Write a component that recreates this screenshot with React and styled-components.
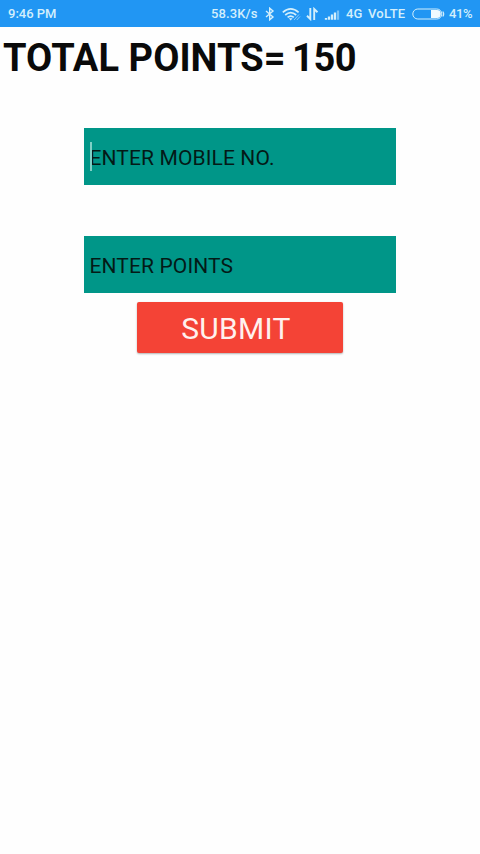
import React, { useState } from 'react';
import styled, { createGlobalStyle } from 'styled-components';

const COLORS = {
  blue: '#2196f3',
  teal: '#009688',
  red: '#f44336',
  status: '#d3effc',
  cursor: '#7fd0c6',
  entry: '#041a17',
};

const GlobalStyle = createGlobalStyle`
  * {
    box-sizing: border-box;
  }
  body {
    margin: 0;
    background-color: #fefefe;
    font-family: Roboto, 'Liberation Sans', sans-serif;
  }
`;

const Screen = styled.div`
  min-height: 100vh;
`;

const StatusBar = styled.header`
  display: flex;
  align-items: center;
  height: 27px;
  padding-left: 8px;
  background-color: ${COLORS.blue};
  color: ${COLORS.status};
  font-size: 13px;
  font-weight: 500;
  line-height: 27px;
  white-space: nowrap;
`;

const StatusText = styled.span`
  flex: none;
  width: ${({ $width }) => $width}px;
  margin-left: ${({ $left }) => $left || 0}px;
  letter-spacing: ${({ $spacing }) => $spacing || 0}px;
`;

const StatusIcon = styled.svg`
  flex: none;
  margin-left: ${({ $left }) => $left}px;
  fill: none;
  stroke: ${COLORS.status};
`;

const Heading = styled.h1`
  display: flex;
  gap: 7px;
  height: 60px;
  margin: 0;
  padding: 1px 0 0 3px;
  font-size: 38px;
  font-weight: 700;
  line-height: 60px;
  color: #0a0a0a;
  white-space: nowrap;
`;

const HeadingPart = styled.span`
  width: ${({ $width }) => $width}px;
  letter-spacing: ${({ $spacing }) => $spacing}px;
`;

const Form = styled.form`
  display: flex;
  flex-direction: column;
  align-items: center;
  padding-top: 41px;
`;

const Field = styled.label`
  display: flex;
  align-items: center;
  position: relative;
  width: 312px;
  height: 57px;
  margin-bottom: ${({ $gap }) => $gap}px;
  background-color: ${COLORS.teal};
`;

const Input = styled.input`
  width: 100%;
  height: 100%;
  padding: 2px 5px 0 5.5px;
  border: none;
  outline: none;
  background: transparent;
  color: ${COLORS.entry};
  font-family: inherit;
  font-size: 21px;
  letter-spacing: 0.12px;

  &::placeholder {
    color: ${COLORS.entry};
    opacity: 1;
  }
`;

const Cursor = styled.span`
  position: absolute;
  left: 6px;
  top: 14px;
  width: 2px;
  height: 29px;
  background-color: ${COLORS.cursor};
`;

const SubmitButton = styled.button`
  width: 206px;
  height: 51px;
  padding: 1px 0 0;
  border: none;
  border-radius: 2px;
  background-color: ${COLORS.red};
  box-shadow: 0 1px 2px rgba(0, 0, 0, 0.3);
  color: #fff1ee;
  font-family: inherit;
  font-size: 30px;
  letter-spacing: 0.3px;
  text-indent: -8px;
`;

const App = () => {
  const [mobile, setMobile] = useState('');
  const [points, setPoints] = useState('');

  return (
    <Screen>
      <GlobalStyle />
      <StatusBar>
        <StatusText $width={50}>9:46 PM</StatusText>
        <StatusText $left={153} $width={47} $spacing={0.1}>58.3K/s</StatusText>
        {/* bluetooth */}
        <StatusIcon $left={6} width="12" height="14" viewBox="0 0 12 14" strokeWidth="1.4">
          <path d="M2 4L9 10L5.7 12.8V1.2L9 4L2 10" />
        </StatusIcon>
        {/* wifi */}
        <StatusIcon $left={6} width="19" height="14" viewBox="0 0 19 14" strokeWidth="1.7">
          <path d="M0.8 5.4Q8.7 -1.6 16.6 5.4M3.2 8Q8.7 3.2 14.2 8M5.6 10.4Q8.7 7.8 11.8 10.4" />
          <path d="M6.8 11.3H10.6L8.7 13.5Z" fill={COLORS.status} stroke="none" />
          <path d="M12 13L17 7.5M14.8 13L18 9.5" strokeWidth="1" opacity="0.6" />
        </StatusIcon>
        {/* data up / down */}
        <StatusIcon $left={5} width="13" height="14" viewBox="0 0 13 14" strokeWidth="1.9">
          <path d="M4.3 1V12L1 8.8M8.2 13V2L11.5 5.2" />
        </StatusIcon>
        {/* signal */}
        <StatusIcon $left={5} width="17" height="14" viewBox="0 0 17 14" strokeWidth="2.3">
          <path d="M2 12.8V11M5 12.8V9.5M8 12.8V7.5M11 12.8V5.5" />
          <path d="M14 12.8V3.5" opacity="0.5" />
        </StatusIcon>
        <StatusText $left={5} $width={17}>4G</StatusText>
        <StatusText $left={5} $width={39} $spacing={0.25}>VoLTE</StatusText>
        {/* battery */}
        <StatusIcon $left={5} width="34" height="14" viewBox="0 0 34 14">
          <rect x="0.8" y="2" width="29" height="10" rx="5" />
          <path d="M19 3H25Q28.8 3 28.8 7T25 11H19Z" fill="#effaff" stroke="none" />
          <path d="M30.8 4.5Q32.6 7 30.8 9.5" strokeWidth="1.2" />
        </StatusIcon>
        <StatusText $left={3} $width={25} $spacing={-0.4}>41%</StatusText>
      </StatusBar>

      <Heading>
        <HeadingPart $width={282} $spacing={0.08}>TOTAL POINTS=</HeadingPart>
        <HeadingPart $width={66} $spacing={-0.4}>150</HeadingPart>
      </Heading>

      <Form onSubmit={(e) => e.preventDefault()}>
        <Field $gap={51}>
          <Cursor />
          <Input
            placeholder="ENTER MOBILE NO."
            value={mobile}
            onChange={(e) => setMobile(e.target.value)}
          />
        </Field>
        <Field $gap={9}>
          <Input
            placeholder="ENTER POINTS"
            value={points}
            onChange={(e) => setPoints(e.target.value)}
          />
        </Field>
        <SubmitButton type="submit">SUBMIT</SubmitButton>
      </Form>
    </Screen>
  );
};

export default App;
